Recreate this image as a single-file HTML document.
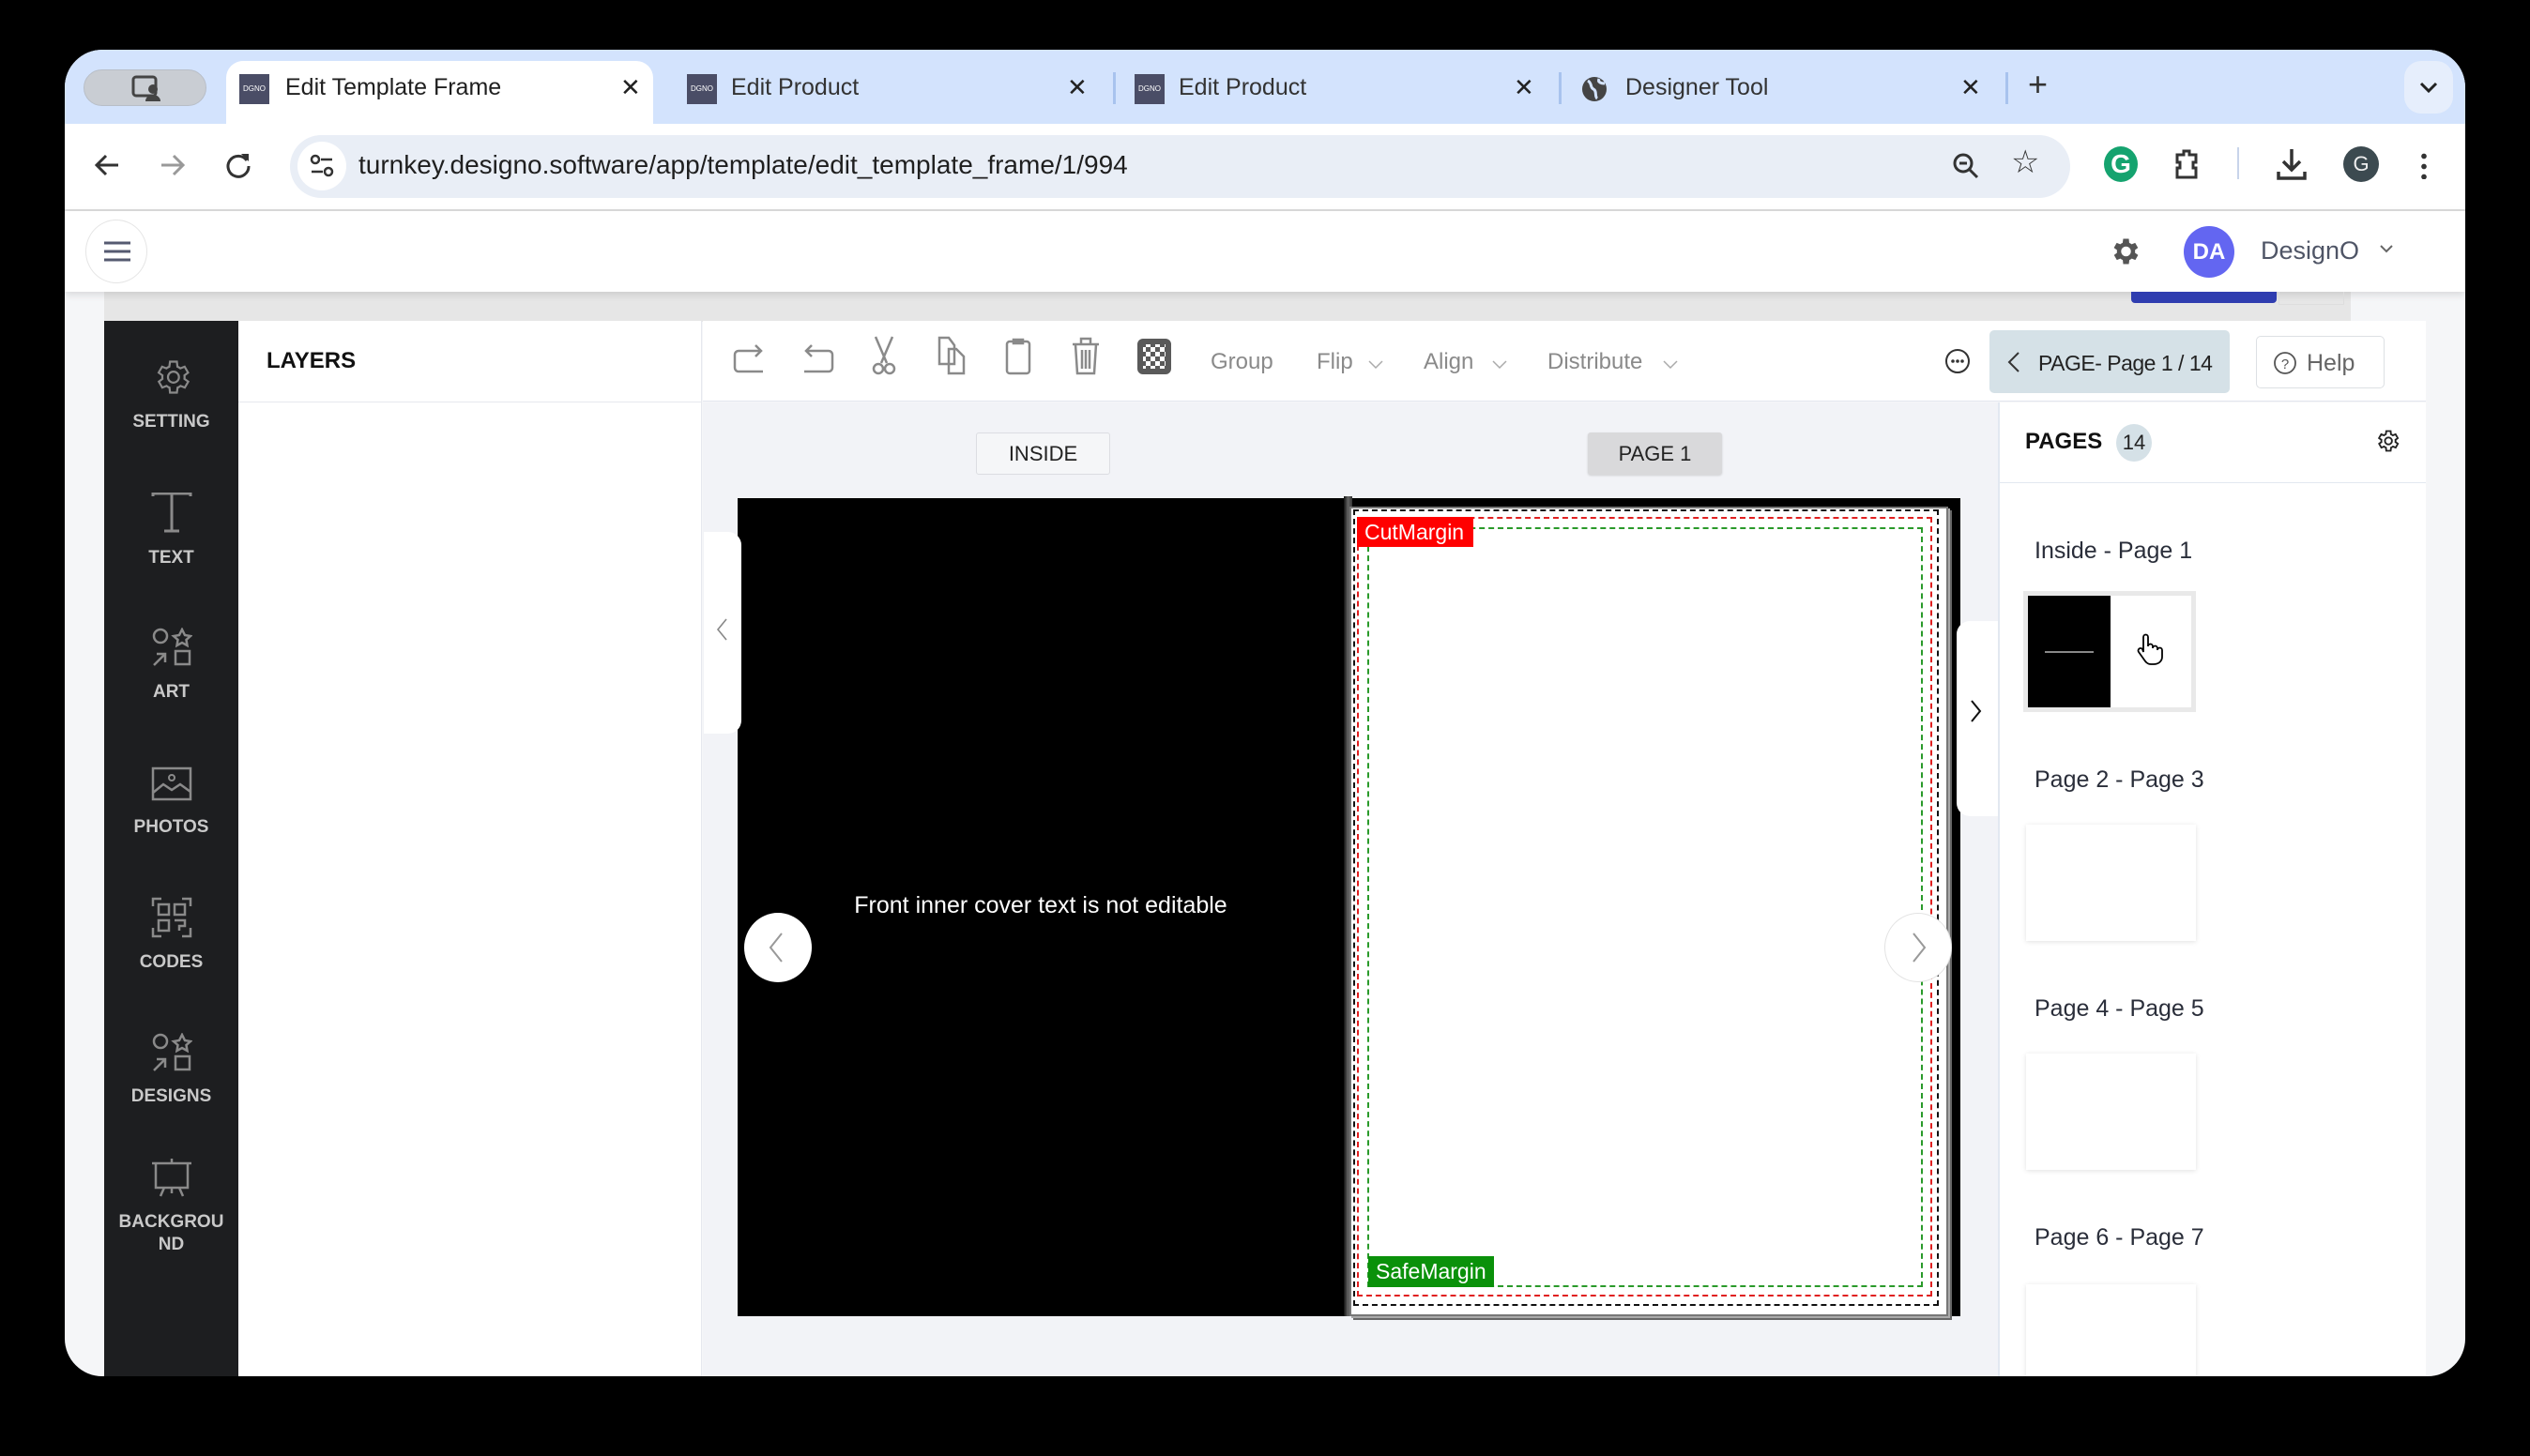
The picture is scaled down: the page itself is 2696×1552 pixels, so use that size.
<!DOCTYPE html>
<html><head><meta charset="utf-8"><style>
*{margin:0;padding:0;box-sizing:border-box}
body{width:2696px;height:1552px;background:#000;position:relative;overflow:hidden;font-family:"Liberation Sans",sans-serif}
.a{position:absolute}
.win{left:69px;top:53px;width:2558px;height:1414px;border-radius:40px;overflow:hidden;background:#f5f6f8}
.t{white-space:nowrap}
.side{color:#c9c9c9;font-weight:bold;font-size:19px;text-align:center;width:143px;left:0}
.tb{color:#8a8a8a;font-size:24px}
.pl{color:#2a2e3a;font-size:25px;left:39px}
.thumb{background:#fff;box-shadow:0 1px 5px rgba(0,0,0,.12)}
</style></head><body>
<div class="a win">
 <div class="a" style="left:0;top:0;width:2558px;height:80px;background:#d3e3fd"></div>
 <div class="a" style="left:20px;top:21px;width:131px;height:39px;border-radius:20px;background:#c9cdd3;border:1px solid #b8bec7"></div>
 <svg class="a" style="left:70px;top:26px" width="34" height="30" viewBox="0 0 34 30"><rect x="3" y="3" width="24" height="20" rx="3" fill="none" stroke="#444" stroke-width="3"/><circle cx="24" cy="16" r="5" fill="#444"/><path d="M16 29a8 7 0 0116 0z" fill="#444"/></svg>
 <div class="a" style="left:172px;top:12px;width:455px;height:70px;background:#fff;border-radius:18px 18px 0 0"></div>
 <div class="a" style="left:186px;top:26px;width:32px;height:32px;background:#4a4d66;color:#fff;font-size:8px;line-height:32px;text-align:center">DGNO</div>
 <div class="a t" style="left:235px;top:26px;font-size:25px;color:#1f1f1f">Edit Template Frame</div>
 <div class="a t" style="left:592px;top:25px;font-size:26px;color:#222">✕</div>
 <div class="a" style="left:663px;top:26px;width:32px;height:32px;background:#4a4d66;color:#fff;font-size:8px;line-height:32px;text-align:center">DGNO</div>
 <div class="a t" style="left:710px;top:26px;font-size:25px;color:#333">Edit Product</div>
 <div class="a t" style="left:1068px;top:25px;font-size:26px;color:#222">✕</div>
 <div class="a" style="left:1117px;top:24px;width:3px;height:34px;background:#a8c3ee"></div>
 <div class="a" style="left:1140px;top:26px;width:32px;height:32px;background:#4a4d66;color:#fff;font-size:8px;line-height:32px;text-align:center">DGNO</div>
 <div class="a t" style="left:1187px;top:26px;font-size:25px;color:#333">Edit Product</div>
 <div class="a t" style="left:1544px;top:25px;font-size:26px;color:#222">✕</div>
 <div class="a" style="left:1592px;top:24px;width:3px;height:34px;background:#a8c3ee"></div>
 <svg class="a" style="left:1615px;top:27px" width="30" height="30" viewBox="0 0 30 30"><circle cx="15" cy="15" r="13" fill="#444"/><path d="M8 6c5 3 2 7 6 9s1 8 4 10M20 4c-2 4 3 5 6 5" stroke="#d3e3fd" stroke-width="3" fill="none"/></svg>
 <div class="a t" style="left:1663px;top:26px;font-size:25px;color:#333">Designer Tool</div>
 <div class="a t" style="left:2020px;top:25px;font-size:26px;color:#222">✕</div>
 <div class="a" style="left:2068px;top:24px;width:3px;height:34px;background:#a8c3ee"></div>
 <div class="a t" style="left:2092px;top:16px;font-size:36px;color:#333">+</div>
 <div class="a" style="left:2493px;top:12px;width:52px;height:56px;border-radius:18px;background:#e6eefc"></div>
 <svg class="a" style="left:2508px;top:32px" width="22" height="16"><path d="M3 4l8 8 8-8" stroke="#222" stroke-width="3" fill="none"/></svg>
 <div class="a" style="left:0;top:79px;width:2558px;height:93px;background:#fff"></div>
 <svg class="a" style="left:30px;top:108px" width="30" height="30"><path d="M27 15H5M14 5L4 15l10 10" stroke="#333" stroke-width="3" fill="none"/></svg>
 <svg class="a" style="left:100px;top:108px" width="30" height="30"><path d="M3 15h22M16 5l10 10-10 10" stroke="#999" stroke-width="3" fill="none"/></svg>
 <svg class="a" style="left:170px;top:108px" width="30" height="30"><path d="M24 10A11 11 0 1026 16" stroke="#333" stroke-width="3" fill="none"/><path d="M18 3h8v8z" fill="#333"/></svg>
 <div class="a" style="left:240px;top:91px;width:1897px;height:67px;border-radius:34px;background:#e9eef6"></div>
 <div class="a" style="left:248px;top:98px;width:52px;height:52px;border-radius:26px;background:#fff"></div>
 <svg class="a" style="left:260px;top:110px" width="28" height="28"><circle cx="7" cy="7" r="4" stroke="#333" stroke-width="2.5" fill="none"/><path d="M13 7h12M3 20h12" stroke="#333" stroke-width="2.5"/><circle cx="21" cy="20" r="4" stroke="#333" stroke-width="2.5" fill="none"/></svg>
 <div class="a t" style="left:313px;top:107px;font-size:28px;color:#1f1f1f">turnkey.designo.software/app/template/edit_template_frame/1/994</div>
 <svg class="a" style="left:2010px;top:108px" width="32" height="32"><circle cx="13" cy="13" r="9" stroke="#333" stroke-width="3" fill="none"/><path d="M9 13h8M20 20l8 8" stroke="#333" stroke-width="3"/></svg>
 <div class="a t" style="left:2074px;top:100px;font-size:34px;color:#333">☆</div>
 <div class="a" style="left:2173px;top:103px;width:36px;height:38px;border-radius:50%;background:#15a36f;color:#fff;font-weight:bold;font-size:28px;text-align:center;line-height:38px">G</div>
 <svg class="a" style="left:2245px;top:104px" width="34" height="36"><path d="M6 8h7V4h6v4h7v8h-3v6h3v10H6V22h3v-6H6z" stroke="#333" stroke-width="3" fill="none"/></svg>
 <div class="a" style="left:2315px;top:104px;width:2px;height:34px;background:#c8d4ea"></div>
 <svg class="a" style="left:2356px;top:104px" width="34" height="36"><path d="M17 2v22M8 15l9 9 9-9M3 26v7h28v-7" stroke="#333" stroke-width="3.5" fill="none"/></svg>
 <div class="a" style="left:2428px;top:103px;width:38px;height:38px;border-radius:50%;background:#3c4a50;color:#eee;font-size:22px;text-align:center;line-height:38px">G</div>
 <div class="a" style="left:2511px;top:108px;width:6px;height:30px;background:radial-gradient(circle,#333 2.6px,transparent 3px) 0 0/6px 11px"></div>
 <div class="a" style="left:0;top:170px;width:2558px;height:2px;background:#dcdcdc"></div>
 <div class="a" style="left:0;top:172px;width:2558px;height:86px;background:#fff;box-shadow:0 3px 8px rgba(0,0,0,.12);z-index:2"></div>
 <div class="a" style="left:22px;top:181px;width:66px;height:68px;border-radius:50%;border:1px solid #e5e5e5;z-index:3"></div>
 <svg class="a" style="left:41px;top:203px;z-index:3" width="30" height="24"><path d="M1 3h28M1 12h28M1 21h28" stroke="#555a70" stroke-width="3"/></svg>
 <svg class="a" style="left:2177px;top:196px;z-index:3" width="36" height="38" viewBox="0 0 24 24"><path fill="#555" d="M19.4 13a7.5 7.5 0 000-2l2.1-1.6-2-3.5-2.5 1a7 7 0 00-1.7-1L15 3h-4l-.4 2.9a7 7 0 00-1.7 1l-2.5-1-2 3.5L6.6 11a7.5 7.5 0 000 2l-2.1 1.6 2 3.5 2.5-1a7 7 0 001.7 1L11 21h4l.4-2.9a7 7 0 001.7-1l2.5 1 2-3.5zM13 15.5a3.5 3.5 0 110-7 3.5 3.5 0 010 7z"/></svg>
 <div class="a" style="left:2258px;top:188px;width:54px;height:55px;border-radius:50%;background:#6366f1;color:#fff;font-weight:bold;font-size:24px;text-align:center;line-height:55px;z-index:3">DA</div>
 <div class="a t" style="left:2340px;top:199px;font-size:27px;color:#4f5566;z-index:3">DesignO</div>
 <svg class="a" style="left:2466px;top:207px;z-index:3" width="16" height="12"><path d="M2 2l6 6 6-6" stroke="#666" stroke-width="2" fill="none"/></svg>
 <div class="a" style="left:42px;top:258px;width:2394px;height:32px;background:#e6e6e6"></div>
 <div class="a" style="left:2202px;top:258px;width:155px;height:12px;background:#2f3db0;border-radius:0 0 4px 4px;z-index:3"></div>
 <div class="a" style="left:2359px;top:258px;width:70px;height:14px;border:1px solid #ddd;border-top:none;z-index:3"></div>
 <!-- sidebar -->
 <div class="a" style="left:42px;top:289px;width:143px;height:1130px;background:#1d1e20">
  <svg class="a" style="left:50px;top:38px" width="44" height="44" viewBox="0 0 24 24"><path fill="none" stroke="#8a8a8a" stroke-width="1.2" d="M19.4 13a7.5 7.5 0 000-2l2.1-1.6-2-3.5-2.5 1a7 7 0 00-1.7-1L15 3h-4l-.4 2.9a7 7 0 00-1.7 1l-2.5-1-2 3.5L6.6 11a7.5 7.5 0 000 2l-2.1 1.6 2 3.5 2.5-1a7 7 0 001.7 1L11 21h4l.4-2.9a7 7 0 001.7-1l2.5 1 2-3.5z"/><circle cx="13" cy="12" r="3.2" fill="none" stroke="#8a8a8a" stroke-width="1.2"/></svg>
  <div class="a side" style="top:97px">SETTING</div>
  <svg class="a" style="left:50px;top:183px" width="44" height="44"><path d="M2 4V1h40v3M22 1v40M14 41h16" stroke="#8a8a8a" stroke-width="3" fill="none"/></svg>
  <div class="a side" style="top:242px">TEXT</div>
  <svg class="a" style="left:50px;top:327px" width="44" height="44"><circle cx="10" cy="9" r="7" stroke="#8a8a8a" stroke-width="2.5" fill="none"/><path d="M33 2l3 6 6 1-4.5 4 1 6-5.5-3-5.5 3 1-6L24 9l6-1z" stroke="#8a8a8a" stroke-width="2.5" fill="none"/><path d="M3 40l12-12M6 28h9v9" stroke="#8a8a8a" stroke-width="2.5" fill="none"/><rect x="26" y="25" width="15" height="14" stroke="#8a8a8a" stroke-width="2.5" fill="none"/></svg>
  <div class="a side" style="top:385px">ART</div>
  <svg class="a" style="left:50px;top:475px" width="44" height="38"><rect x="2" y="2" width="40" height="33" stroke="#8a8a8a" stroke-width="2.5" fill="none"/><path d="M2 28l11-9 9 6 9-6 11 8" stroke="#8a8a8a" stroke-width="2.5" fill="none"/><circle cx="22" cy="12" r="3" stroke="#8a8a8a" stroke-width="2" fill="none"/></svg>
  <div class="a side" style="top:529px">PHOTOS</div>
  <svg class="a" style="left:50px;top:614px" width="44" height="44"><path d="M2 10V2h9M33 2h9v8M2 33v9h9M33 42h9v-9" stroke="#8a8a8a" stroke-width="2.5" fill="none"/><rect x="8" y="8" width="11" height="11" stroke="#8a8a8a" stroke-width="2.5" fill="none"/><rect x="25" y="8" width="11" height="11" stroke="#8a8a8a" stroke-width="2.5" fill="none"/><rect x="8" y="25" width="11" height="11" stroke="#8a8a8a" stroke-width="2.5" fill="none"/><path d="M25 25h11v6h-6v5" stroke="#8a8a8a" stroke-width="2.5" fill="none"/></svg>
  <div class="a side" style="top:673px">CODES</div>
  <svg class="a" style="left:50px;top:759px" width="44" height="44"><circle cx="10" cy="9" r="7" stroke="#8a8a8a" stroke-width="2.5" fill="none"/><path d="M33 2l3 6 6 1-4.5 4 1 6-5.5-3-5.5 3 1-6L24 9l6-1z" stroke="#8a8a8a" stroke-width="2.5" fill="none"/><path d="M3 40l12-12M6 28h9v9" stroke="#8a8a8a" stroke-width="2.5" fill="none"/><rect x="26" y="25" width="15" height="14" stroke="#8a8a8a" stroke-width="2.5" fill="none"/></svg>
  <div class="a side" style="top:816px">DESIGNS</div>
  <svg class="a" style="left:50px;top:891px" width="44" height="44"><path d="M1 7h42M5 7v26h34V7M22 2v5M14 33l-4 9M30 33l4 9M22 33v6" stroke="#8a8a8a" stroke-width="2.5" fill="none"/></svg>
  <div class="a side" style="top:949px;line-height:24px">BACKGROU<br>ND</div>
 </div>
 <!-- layers -->
 <div class="a" style="left:185px;top:289px;width:494px;height:1130px;background:#fff;border-right:1px solid #e6e8ee"></div>
 <div class="a" style="left:185px;top:375px;width:494px;height:1px;background:#e6e8ee"></div>
 <div class="a t" style="left:215px;top:318px;font-size:24px;font-weight:bold;color:#111">LAYERS</div>
 <!-- toolbar -->
 <div class="a" style="left:680px;top:289px;width:1836px;height:86px;background:#fff;border-bottom:1px solid #e3e6ee"></div>
 <svg class="a" style="left:712px;top:312px" width="36" height="36"><path d="M30 9H6a4 4 0 00-4 4v14a4 4 0 004 4h26M24 3l6 6-6 6" stroke="#8a8a8a" stroke-width="2.5" fill="none"/></svg>
 <svg class="a" style="left:784px;top:312px" width="36" height="36"><path d="M6 9h24a4 4 0 014 4v14a4 4 0 01-4 4H4M12 3L6 9l6 6" stroke="#8a8a8a" stroke-width="2.5" fill="none"/></svg>
 <svg class="a" style="left:858px;top:305px" width="30" height="42"><path d="M6 1l12 28M24 1L12 29" stroke="#8a8a8a" stroke-width="2.5"/><circle cx="9" cy="35" r="5" stroke="#8a8a8a" stroke-width="2.5" fill="none"/><circle cx="21" cy="35" r="5" stroke="#8a8a8a" stroke-width="2.5" fill="none"/></svg>
 <svg class="a" style="left:930px;top:305px" width="30" height="42"><path d="M2 2h10l6 8v20H2z M12 14h8l8 8v18H12z" stroke="#8a8a8a" stroke-width="2.5" fill="#fff"/></svg>
 <svg class="a" style="left:1001px;top:305px" width="30" height="42"><rect x="3" y="6" width="24" height="34" rx="3" stroke="#8a8a8a" stroke-width="2.5" fill="none"/><path d="M10 8V4h10v4z" stroke="#8a8a8a" stroke-width="2.5" fill="#8a8a8a"/></svg>
 <svg class="a" style="left:1073px;top:305px" width="30" height="42"><path d="M1 9h28M10 9V3h10v6M4 9l2 31h18l2-31M11 15v20M15 15v20M19 15v20" stroke="#8a8a8a" stroke-width="2.5" fill="none"/></svg>
 <div class="a" style="left:1143px;top:308px;width:36px;height:38px;border-radius:6px;background:#5a5a5a;background-image:conic-gradient(#fff 25%,#5a5a5a 0 50%,#fff 0 75%,#5a5a5a 0);background-size:10px 10px;background-position:8px 8px;border:6px solid #5a5a5a"></div>
 <div class="a t tb" style="left:1221px;top:319px">Group</div>
 <div class="a t tb" style="left:1334px;top:319px">Flip</div>
 <svg class="a" style="left:1388px;top:330px" width="18" height="12"><path d="M2 2l7 7 7-7" stroke="#aaa" stroke-width="1.5" fill="none"/></svg>
 <div class="a t tb" style="left:1448px;top:319px">Align</div>
 <svg class="a" style="left:1520px;top:330px" width="18" height="12"><path d="M2 2l7 7 7-7" stroke="#aaa" stroke-width="1.5" fill="none"/></svg>
 <div class="a t tb" style="left:1580px;top:319px">Distribute</div>
 <svg class="a" style="left:1702px;top:330px" width="18" height="12"><path d="M2 2l7 7 7-7" stroke="#aaa" stroke-width="1.5" fill="none"/></svg>
 <svg class="a" style="left:2003px;top:318px" width="28" height="28"><circle cx="14" cy="14" r="12" stroke="#333" stroke-width="2" fill="none"/><circle cx="9" cy="14" r="1.8" fill="#333"/><circle cx="14" cy="14" r="1.8" fill="#333"/><circle cx="19" cy="14" r="1.8" fill="#333"/></svg>
 <div class="a" style="left:2051px;top:299px;width:256px;height:67px;border-radius:5px;background:#d5e1e7"></div>
 <svg class="a" style="left:2069px;top:321px" width="16" height="24"><path d="M13 2L3 12l10 10" stroke="#333" stroke-width="2" fill="none"/></svg>
 <div class="a t" style="left:2103px;top:321px;font-size:23px;color:#222;letter-spacing:-0.5px">PAGE- Page 1 / 14</div>
 <div class="a" style="left:2335px;top:305px;width:137px;height:56px;border-radius:5px;border:1px solid #dde0e4;background:#fff"></div>
 <svg class="a" style="left:2353px;top:321px" width="26" height="26"><circle cx="13" cy="13" r="11" stroke="#555" stroke-width="1.8" fill="none"/><text x="13" y="19" font-size="15" text-anchor="middle" fill="#555" font-family="Liberation Sans">?</text></svg>
 <div class="a t" style="left:2389px;top:320px;font-size:25px;color:#666">Help</div>
 <!-- canvas -->
 <div class="a" style="left:680px;top:376px;width:1380px;height:1043px;background:#f2f3f7"></div>
 <div class="a t" style="left:971px;top:408px;width:143px;height:45px;border:1px solid #dcdde2;border-radius:3px;background:#f5f6f8;font-size:22px;color:#222;text-align:center;line-height:43px">INSIDE</div>
 <div class="a t" style="left:1623px;top:408px;width:143px;height:45px;border-radius:3px;background:#d9d9db;font-size:22px;color:#222;text-align:center;line-height:45px;box-shadow:0 1px 2px rgba(0,0,0,.15)">PAGE 1</div>
 <div class="a" style="left:717px;top:478px;width:1303px;height:872px;background:#000"></div>
 <div class="a t" style="left:717px;top:898px;width:646px;text-align:center;font-size:25px;color:#fff">Front inner cover text is not editable</div>
 <div class="a" style="left:1363px;top:476px;width:9px;height:874px;background:linear-gradient(90deg,#111,#666,#333)"></div>
 <div class="a" style="left:1369px;top:487px;width:638px;height:863px;background:#fff;border:2px solid #777;box-shadow:2px 2px 0 #aaa,4px 4px 0 #666"></div>
 <div class="a" style="left:1373px;top:490px;width:624px;height:849px;border:2px dashed #111"></div>
 <div class="a" style="left:1377px;top:498px;width:613px;height:831px;border:2px dashed #e02020"></div>
 <div class="a" style="left:1388px;top:509px;width:592px;height:810px;border:2px dashed #2a9a2a"></div>
 <div class="a t" style="left:1377px;top:498px;width:124px;height:32px;background:#f00;color:#fff;font-size:23px;line-height:32px;padding-left:8px">CutMargin</div>
 <div class="a t" style="left:1389px;top:1286px;width:134px;height:33px;background:#0a910a;color:#fff;font-size:23px;line-height:33px;padding-left:8px">SafeMargin</div>
 <div class="a" style="left:724px;top:920px;width:72px;height:74px;border-radius:50%;background:#fff"></div>
 <svg class="a" style="left:748px;top:940px" width="20" height="34"><path d="M16 2L4 17l12 15" stroke="#999" stroke-width="2" fill="none"/></svg>
 <div class="a" style="left:1939px;top:920px;width:72px;height:74px;border-radius:50%;background:#fff;border:1px solid #e3e3e3"></div>
 <svg class="a" style="left:1966px;top:940px" width="20" height="34"><path d="M4 2l12 15L4 32" stroke="#999" stroke-width="2" fill="none"/></svg>
 <div class="a" style="left:681px;top:514px;width:40px;height:215px;background:#fff;border-radius:0 14px 14px 0"></div>
 <svg class="a" style="left:693px;top:605px" width="14" height="26"><path d="M12 2L3 13l9 11" stroke="#888" stroke-width="1.6" fill="none"/></svg>
 <div class="a" style="left:2016px;top:609px;width:44px;height:208px;background:#fff;border-radius:14px 0 0 14px"></div>
 <svg class="a" style="left:2030px;top:692px" width="14" height="26"><path d="M2 2l9 11-9 11" stroke="#111" stroke-width="2" fill="none"/></svg>
 <!-- pages panel -->
 <div class="a" style="left:2060px;top:376px;width:456px;height:1043px;background:#fff;border-left:2px solid #e2e8f0"></div>
 <div class="a" style="left:2060px;top:461px;width:456px;height:1px;background:#e2e8f0"></div>
 <div class="a t" style="left:2089px;top:404px;font-size:24px;font-weight:bold;color:#111">PAGES</div>
 <div class="a" style="left:2186px;top:399px;width:38px;height:40px;border-radius:50%;background:#d5e1e7;color:#222;font-size:22px;text-align:center;line-height:40px">14</div>
 <svg class="a" style="left:2461px;top:403px" width="28" height="28" viewBox="0 0 24 24"><path fill="none" stroke="#222" stroke-width="1.6" d="M19.4 13a7.5 7.5 0 000-2l2.1-1.6-2-3.5-2.5 1a7 7 0 00-1.7-1L15 3h-4l-.4 2.9a7 7 0 00-1.7 1l-2.5-1-2 3.5L6.6 11a7.5 7.5 0 000 2l-2.1 1.6 2 3.5 2.5-1a7 7 0 001.7 1L11 21h4l.4-2.9a7 7 0 001.7-1l2.5 1 2-3.5z"/><circle cx="13" cy="12" r="3.2" fill="none" stroke="#222" stroke-width="1.6"/></svg>
 <div class="a" style="left:2060px;top:462px;width:456px">
  <div class="a t pl" style="top:58px">Inside - Page 1</div>
  <div class="a" style="left:27px;top:115px;width:184px;height:129px;background:#e9e9e9"></div>
  <div class="a" style="left:32px;top:120px;width:174px;height:119px;background:#fff"></div>
  <div class="a" style="left:32px;top:120px;width:88px;height:119px;background:#000"></div>
  <div class="a" style="left:50px;top:179px;width:52px;height:2px;background:#888"></div>
  <svg class="a" style="left:146px;top:160px" width="30" height="34" viewBox="0 0 30 34"><path d="M9 20V4a2.5 2.5 0 015 0v10a2.5 2.5 0 015 0v2a2.5 2.5 0 015 0v2a2.5 2.5 0 015 0v7c0 5-4 8-9 8h-3c-4 0-6-3-8-6l-5-7a2.5 2.5 0 014-3z" fill="#fff" stroke="#000" stroke-width="1.8"/></svg>
  <div class="a t pl" style="top:302px">Page 2 - Page 3</div>
  <div class="a thumb" style="left:30px;top:364px;width:181px;height:124px"></div>
  <div class="a t pl" style="top:546px">Page 4 - Page 5</div>
  <div class="a thumb" style="left:30px;top:608px;width:181px;height:124px"></div>
  <div class="a t pl" style="top:790px">Page 6 - Page 7</div>
  <div class="a thumb" style="left:30px;top:854px;width:181px;height:124px"></div>
 </div>
</div>
</body></html>
